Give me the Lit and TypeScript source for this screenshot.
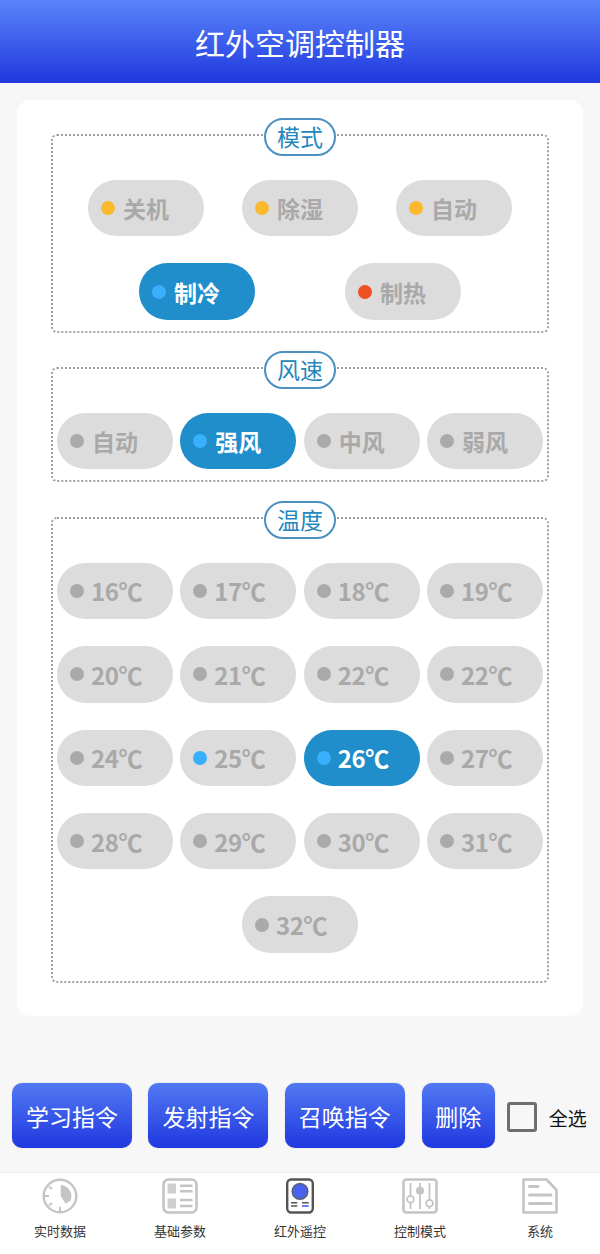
import { LitElement, html, css, svg } from "lit";
import { customElement } from "lit/decorators.js";

const temps = ["16","17","18","19","20","21","22","22","24","25","26","27","28","29","30","31","32"];

const G = "#c4c4c4";
const icons = [
  svg`<circle cx="18" cy="18" r="16.3" fill="none" stroke="${G}" stroke-width="2.4"/>
      <path d="M2 18 H7 M18 29 V34 M7 8.5 L10 11 M7 27.5 L10 25" stroke="${G}" stroke-width="2"/>
      <path d="M18.7 7 A11.5 11.5 0 0 1 28.7 22.5 L23.7 25.7 L18.7 18 Z" fill="${G}"/>`,
  svg`<rect x="1.5" y="1.5" width="33" height="33" rx="5" fill="none" stroke="${G}" stroke-width="2.6"/>
      <rect x="5.5" y="5.5" width="8.5" height="10" fill="#cfcfcf"/><rect x="5.5" y="20.5" width="8.5" height="10" fill="#cfcfcf"/>
      <path d="M18 7.7 H30.5 M18 13.3 H30.5 M18 22 H30.5 M18 28 H30.5" stroke="${G}" stroke-width="2.4"/>`,
  svg`<rect x="5.2" y="1.5" width="25.6" height="33" rx="4" fill="#fff" stroke="#555" stroke-width="2.4"/>
      <circle cx="18" cy="13.3" r="7.8" fill="#4a62ee" stroke="#5b5f78" stroke-width="1.6"/>
      <path d="M9 24.7 H15.3 M9 28 H15.3 M20 24.7 H26.7" stroke="#555" stroke-width="1.6"/>
      <path d="M20 28 H26.7" stroke="#4a62ee" stroke-width="1.6"/>`,
  svg`<rect x="1.5" y="1.5" width="33" height="33" rx="3" fill="none" stroke="${G}" stroke-width="2.6"/>
      <path d="M8.5 5 V17.5 M8.5 25 V31 M18 5 V9 M18 17 V31 M27.5 5 V21.5 M27.5 29 V31" stroke="${G}" stroke-width="1.8"/>
      <circle cx="8.5" cy="21.3" r="3.4" fill="#fff" stroke="${G}" stroke-width="1.8"/>
      <circle cx="18" cy="12.7" r="4" fill="${G}"/>
      <circle cx="27.5" cy="25.3" r="3.4" fill="#fff" stroke="${G}" stroke-width="1.8"/>`,
  svg`<path d="M1.5 1.5 H24.5 L34.5 12 V34.5 H1.5 Z" fill="#fff" stroke="${G}" stroke-width="2.6" stroke-linejoin="round"/>
      <path d="M7.5 8.5 H16 M7.5 17 H29 M7.5 25.5 H29" stroke="${G}" stroke-width="3" stroke-linecap="round"/>`,
];

const tabs = ["实时数据", "基础参数", "红外遥控", "控制模式", "系统"];

@customElement("app-root")
export class AppRoot extends LitElement {
  static styles = css`
    :host {
      display: flex;
      flex-direction: column;
      width: 600px;
      height: 1254px;
      background: #f7f7f7;
      font-family: "Noto Sans CJK SC", "Noto Sans", sans-serif;
      overflow: hidden;
    }
    .header {
      height: 83px;
      flex: none;
      background: linear-gradient(#5a84fa, #1f38de);
      color: #fff;
      font-size: 30px;
      display: flex;
      align-items: center;
      justify-content: center;
    }
    .card {
      margin: 17px 17px 0;
      height: 916px;
      flex: none;
      box-sizing: border-box;
      background: #fff;
      border-radius: 14px;
      padding: 16px 34px 0;
      display: flex;
      flex-direction: column;
      gap: 16.3px;
    }
    fieldset {
      margin: 0;
      padding: 26px 0 11px;
      min-width: 0;
      border: 2px dotted #a0a0a0;
      border-radius: 6px;
      box-sizing: border-box;
    }
    fieldset.last { padding-bottom: 28px; }
    legend {
      margin: 0 auto;
      padding: 0;
      width: 72px;
      height: 38px;
      box-sizing: border-box;
      border: 2px solid #4a90c0;
      border-radius: 19px;
      background: #fff;
      color: #2386bd;
      font-size: 23px;
      line-height: 32px;
      text-align: center;
      transform: translateY(2px);
    }
    .rows { display: flex; flex-direction: column; gap: 27px; }
    .pills {
      display: flex;
      flex-wrap: wrap;
      justify-content: center;
      column-gap: 7.33px;
      row-gap: 27px;
    }
    .pills.g38 { column-gap: 38px; }
    .pills.g90 { column-gap: 90px; }
    .pill {
      width: 116px;
      height: 56.4px;
      border-radius: 28.2px;
      background: #dcdcdc;
      color: #a9a9a9;
      font-weight: 700;
      font-size: 23px;
      display: flex;
      align-items: center;
      padding-left: 13px;
      box-sizing: border-box;
      gap: 8px;
    }
    .pill.t { gap: 7px; font-size: 24px; letter-spacing: -0.4px; }
    .pill.on { background: #1f8ecb; color: #fff; }
    .dot { width: 14px; height: 14px; border-radius: 50%; background: #aaaaaa; flex: none; }
    .dot.y { background: #fdb92e; }
    .dot.b { background: #38b0fb; }
    .dot.r { background: #f04e23; }
    .actions {
      margin-top: 67px;
      padding-left: 12px;
      height: 65px;
      flex: none;
      display: flex;
      align-items: center;
    }
    .btn {
      width: 120px;
      height: 65px;
      margin-right: 16.4px;
      border-radius: 10px;
      background: linear-gradient(#5279f3, #1f38e0);
      color: #fff;
      font-size: 23px;
      display: flex;
      align-items: center;
      justify-content: center;
      box-shadow: 0 0 1px rgba(0,0,50,.4);
    }
    .btn.third { margin-right: 17px; }
    .btn.small { width: 73px; margin-right: 12px; }
    .check {
      width: 30px; height: 30px;
      box-sizing: border-box;
      border: 3px solid #6e6e6e;
      border-radius: 3px;
      margin: 3px 12px 0 0;
    }
    .all { font-size: 19px; color: #111; margin-top: 3px; }
    .tabs {
      margin-top: 24px;
      flex: 1;
      background: #fff;
      border-top: 1px solid #eee;
      display: flex;
    }
    .tab {
      flex: none;
      width: 120px;
      display: flex;
      flex-direction: column;
      align-items: center;
      padding-top: 5px;
      font-size: 13px;
      color: #333;
    }
    .tab svg { width: 36px; height: 36px; display: block; }
    .tab span { margin-top: 7px; line-height: 20px; }
  `;

  private pill(text: string, dot = "", on = false, t = false) {
    return html`<div class="pill ${on ? "on" : ""} ${t ? "t" : ""}"><i class="dot ${dot}"></i>${text}</div>`;
  }

  render() {
    return html`
      <div class="header">红外空调控制器</div>
      <div class="card">
        <fieldset>
          <legend>模式</legend>
          <div class="rows">
            <div class="pills g38">${this.pill("关机", "y")}${this.pill("除湿", "y")}${this.pill("自动", "y")}</div>
            <div class="pills g90">${this.pill("制冷", "b", true)}${this.pill("制热", "r")}</div>
          </div>
        </fieldset>
        <fieldset>
          <legend>风速</legend>
          <div class="pills">
            ${this.pill("自动")}${this.pill("强风", "b", true)}${this.pill("中风")}${this.pill("弱风")}
          </div>
        </fieldset>
        <fieldset class="last">
          <legend>温度</legend>
          <div class="pills">
            ${temps.map((v) => this.pill(v + "℃", v === "25" || v === "26" ? "b" : "", v === "26", true))}
          </div>
        </fieldset>
      </div>
      <div class="actions">
        <div class="btn">学习指令</div>
        <div class="btn">发射指令</div>
        <div class="btn third">召唤指令</div>
        <div class="btn small">删除</div>
        <div class="check"></div>
        <div class="all">全选</div>
      </div>
      <div class="tabs">
        ${tabs.map((label, i) => html`
          <div class="tab">
            <svg viewBox="0 0 36 36">${icons[i]}</svg>
            <span>${label}</span>
          </div>`)}
      </div>
    `;
  }
}
